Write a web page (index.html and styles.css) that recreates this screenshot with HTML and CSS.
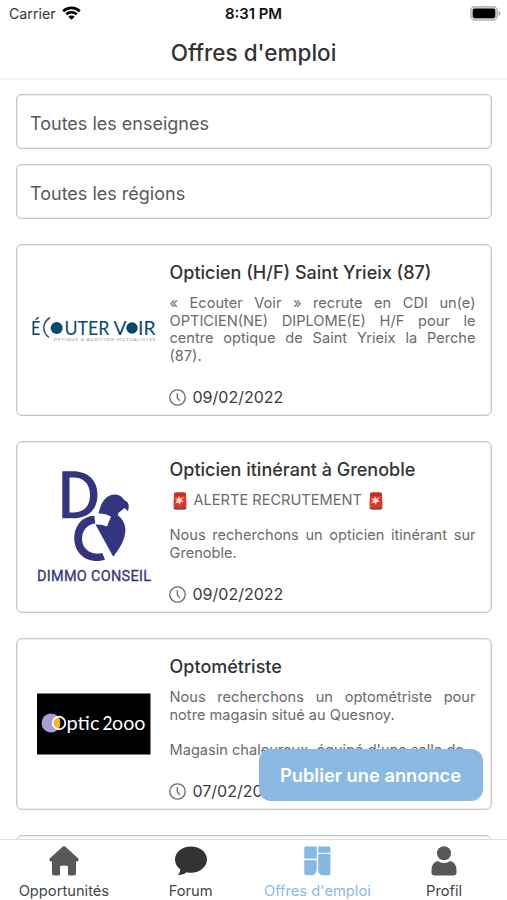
FILE: index.html
```html
<!DOCTYPE html>
<html lang="fr">
<head>
<meta charset="utf-8">
<title>Offres d'emploi</title>
<link rel="stylesheet" href="styles.css">
</head>
<body>
<div class="app">
  <header class="header">
    <div class="status">
      <div class="carrier"><span>Carrier</span>
        <svg class="wifi" width="19" height="14" viewBox="0 0 19 14"><path d="M1.200 5.200a12 12 0 0 1 16.600 0M4.200 8.300a7.700 7.700 0 0 1 10.600 0" fill="none" stroke="#000" stroke-width="2.600"/><path d="M9.500 13.800 6.300 10.700a4.600 4.600 0 0 1 6.400 0z"/></svg>
      </div>
      <time class="clock">8:31 PM</time>
      <svg class="battery" width="31" height="15" viewBox="0 0 31 15"><rect x=".8" y=".8" width="26.400" height="13.200" rx="3.800" fill="#ddd" stroke="#b5b5b5" stroke-width="1.400"/><rect x="2.700" y="2.600" width="22.600" height="9.600" rx="2"/><path d="M28.500 5v5q2-.8 2-2.500T28.500 5z" fill="#aaa"/></svg>
    </div>
    <h1 class="title">Offres d'emploi</h1>
  </header>

  <main class="content">
    <div class="filters">
      <div class="field">Toutes les enseignes</div>
      <div class="field">Toutes les régions</div>
    </div>

    <article class="card">
      <div class="logo">
        <svg width="126" height="30" viewBox="30 316 126 30">
          <g class="ecouter"><text x="31" y="335.500" textLength="9.500" lengthAdjust="spacingAndGlyphs">É</text><text x="64.500" y="335.500" textLength="45" lengthAdjust="spacingAndGlyphs">UTER</text><text x="113.500" y="335.500" textLength="13" lengthAdjust="spacingAndGlyphs">V</text><text x="138" y="335.500" textLength="17.500" lengthAdjust="spacingAndGlyphs">IR</text></g>
          <path d="M50 318.500c-8 5-8 15-1 20" fill="none" stroke="#31576d" stroke-width="1.500"/>
          <circle cx="56.700" cy="329" r="6" fill="#07496c"/><circle cx="132" cy="329" r="5.700" fill="#07496c"/>
          <text class="ecouter-sub" x="53.500" y="342.300" textLength="101.500">OPTIQUE &amp; AUDITION MUTUALISTES</text>
        </svg>
      </div>
      <div class="body">
        <h2 class="name">Opticien (H/F) Saint Yrieix (87)</h2>
        <p class="desc">« Ecouter Voir » recrute en CDI un(e) OPTICIEN(NE) DIPLOME(E) H/F pour le centre optique de Saint Yrieix la Perche (87).</p>
        <div class="date"><svg class="clock-icon" viewBox="0 0 17 17"><circle cx="8.500" cy="8.500" r="7.700"/><path d="M8.300 4.200v4.500l2.400 3.200"/></svg>09/02/2022</div>
      </div>
    </article>

    <article class="card">
      <div class="logo">
        <svg width="118" height="116" viewBox="34 470 118 116">
          <g fill="#34357f">
            <path fill-rule="evenodd" d="M62.300 472.300H73c15 0 24.500 9 24.500 23.700S88 519.300 73 519.300H62.300zM69.500 478.500v35H73c10.500 0 17-6 17-17.500s-6.500-17.500-17-17.500z"/>
            <path d="M98.500 514.500C100 508 102 502 106.500 498.500c5-4 13-4 16.500 1 1 1.500 2 2 3.500 3 2.500 1.500 2.800 5 1.300 10-1-2.500-2.500-3.500-4.300-3-1.500 3-6 3-5.500 7 5 3.500 8 10 7.300 16.500-1 10-7 18-12 24.700Q104 541 95.500 525.500q6-.5 11.500 2l4-10q-6-3.500-12.500-3z"/>
            <path d="M94.300 516.700C82 517 74.300 527 74.300 539.500 74.300 555 88 566 105 560.700l-2.700-6.700C91 557 82 549.500 82 540c0-8.500 5.500-15 13.300-15.500z"/>
          </g>
          <text class="dimmo" x="37" y="581.700" textLength="114" lengthAdjust="spacing">DIMMO CONSEIL</text>
        </svg>
      </div>
      <div class="body">
        <h2 class="name">Opticien itinérant à Grenoble</h2>
        <p class="desc"><span class="alert"><svg class="siren" viewBox="0 0 14 18"><path d="M.5 15h13v1.500l-2 1.300h-9L.5 16.500z" fill="#69565a"/><path d="M1 2.500Q1 .5 3 .5h8q2 0 2 2l.5 12Q7 17 .5 14.500z" fill="#e43424"/><path d="M1 2.500Q1 .5 3 .5h8q2 0 2 2V4H1z" fill="#c52b27"/><path d="m6 4 1.200 2.700L11 4.500 8.500 8l2.800 1.500-3.600.5L7 13l-1.500-2.600-3.200 1L4 8.500 2 6.500l3 .2z" fill="#ffd9d3"/></svg>ALERTE RECRUTEMENT<svg class="siren" viewBox="0 0 14 18"><path d="M.5 15h13v1.500l-2 1.300h-9L.5 16.500z" fill="#69565a"/><path d="M1 2.500Q1 .5 3 .5h8q2 0 2 2l.5 12Q7 17 .5 14.500z" fill="#e43424"/><path d="M1 2.500Q1 .5 3 .5h8q2 0 2 2V4H1z" fill="#c52b27"/><path d="m6 4 1.200 2.700L11 4.500 8.500 8l2.800 1.500-3.600.5L7 13l-1.500-2.600-3.200 1L4 8.500 2 6.500l3 .2z" fill="#ffd9d3"/></svg></span><br><br>Nous recherchons un opticien itinérant sur Grenoble.</p>
        <div class="date"><svg class="clock-icon" viewBox="0 0 17 17"><circle cx="8.500" cy="8.500" r="7.700"/><path d="M8.300 4.200v4.500l2.400 3.200"/></svg>09/02/2022</div>
      </div>
    </article>

    <article class="card">
      <div class="logo">
        <svg width="116" height="62" viewBox="35 693 116 62">
          <rect x="37" y="693.500" width="113.500" height="61" fill="#000"/>
          <circle cx="51" cy="723" r="9.500" fill="#a3a0d8"/>
          <circle cx="59" cy="723" r="6.300" fill="#000"/>
          <path d="M59 717a6 6 0 0 0 0 12q2.500-6 0-12z" fill="#f9b517"/>
          <circle cx="59" cy="723" r="6.300" fill="none" stroke="#fff" stroke-width="1.800"/>
          <text class="optic" x="66.500" y="729.500" textLength="33" lengthAdjust="spacingAndGlyphs">ptic</text>
          <text class="optic" x="102.500" y="729.500" textLength="10" lengthAdjust="spacingAndGlyphs">2</text>
          <text class="optic" x="112" y="729.500" textLength="33.500" lengthAdjust="spacingAndGlyphs">ooo</text>
        </svg>
      </div>
      <div class="body">
        <h2 class="name">Optométriste</h2>
        <p class="desc">Nous recherchons un optométriste pour notre magasin situé au Quesnoy.<br><br>Magasin chaleureux, équipé d'une salle de</p>
        <div class="date"><svg class="clock-icon" viewBox="0 0 17 17"><circle cx="8.500" cy="8.500" r="7.700"/><path d="M8.300 4.200v4.500l2.400 3.200"/></svg>07/02/2022</div>
      </div>
    </article>

    <article class="card"></article>
  </main>

  <button class="publish">Publier une annonce</button>

  <nav class="tabs">
    <a class="tab"><svg class="tab-icon" viewBox="0 0 30 30"><path fill="#58585a" d="M13.500.8q1.500-1.200 3 0L29.300 12.500q1.200 3-1.500 3H27V27q0 2.500-2.500 2.500h-4q-1.500 0-1.500-1.500v-7q0-1.200-1.200-1.200h-5.600Q11 19.800 11 21v7q0 1.500-1.500 1.500h-4Q3 29.500 3 27V15.500h-.8q-2.700 0-1.500-3z"/></svg><span>Opportunités</span></a>
    <a class="tab"><svg class="tab-icon forum" viewBox="0 0 32 30"><path fill="#333335" d="M16 .5c9 0 16 5.800 16 13s-7 13.200-16 13.200q-2.300 0-4.300-.5-3.200 3-7.700 2.800-1.200-.2-.5-1 2-2 1.800-4.500Q0 19.500 0 13.500C0 6.300 7 .5 16 .5z"/></svg><span>Forum</span></a>
    <a class="tab active"><svg class="tab-icon" viewBox="0 0 30 30"><g fill="#85b8e3"><path d="M4 .5h10.800v12H2.300V2.200Q2.300.5 4 .5zM16.200.5h10.300q2 0 2 2v4.300H16.200zM2.300 14.200h12.500v9q-.5 6-6 6H4q-1.700 0-1.700-1.700zM16.200 8h12.300v19.500q0 1.700-1.700 1.700H20q-4-1-3.800-5z"/></g></svg><span>Offres d'emploi</span></a>
    <a class="tab"><svg class="tab-icon" viewBox="0 0 30 30"><circle cx="15" cy="7.300" r="7" fill="#58585a"/><path fill="#58585a" d="M8.500 15q6.500 4 13 0 6 2 6 9v2.500q0 3-3 3h-19q-3 0-3-3V24q0-7 6-9z"/></svg><span>Profil</span></a>
  </nav>
</div>
</body>
</html>
```

FILE: styles.css
```css
* { box-sizing: border-box; }
body { margin: 0; background: #fff; color: #333335; font-family: Inter, "Liberation Sans", sans-serif; }
h1, h2, p { margin: 0; }
svg { display: block; flex: none; }
.app { position: relative; display: flex; flex-direction: column; width: 507px; height: 900px; overflow: hidden; }
.header { flex: none; height: 80px; border-bottom: 2px solid #f6f6f6; }
.status { display: grid; grid-template-columns: 1fr auto 1fr; align-items: center; height: 27px; padding: 0 6px 0 9px; }
.carrier { display: flex; align-items: center; gap: 6px; font-size: 14.200px; color: #333; }
.wifi { margin-top: -2px; }
.clock { margin-left: -3px; font-size: 14.900px; font-weight: 600; color: #111; }
.battery { justify-self: end; }
.title { margin-top: 10.500px; text-align: center; font-size: 22.500px; line-height: 30px; font-weight: 500; }
.content { flex: 1; min-height: 0; overflow: hidden; display: flex; flex-direction: column; gap: 25px; padding: 14px 15px 0 16px; }
.filters { display: flex; flex-direction: column; gap: 15px; }
.field { height: 55px; padding: 3px 13px 0; display: flex; align-items: center; border: 1px solid #c6c6c8; box-shadow: inset 0 0 0 1px #ebebec; border-radius: 5px; font-size: 18px; color: #58585a; }
.card { flex: none; display: flex; height: 172px; border: 1px solid #c6c6c8; box-shadow: inset 0 0 0 1px #ebebec; border-radius: 6px; }
.logo { width: 152.500px; display: flex; align-items: center; justify-content: center; }
.body { flex: 1; padding: 17px 15.500px 0 0; }
.name { font-size: 18px; line-height: 22px; font-weight: 500; white-space: nowrap; }
.desc { margin-top: 11px; height: 70px; font-size: 14.600px; line-height: 17.500px; color: #6a6a6c; text-align: justify; }
.alert { display: inline-flex; align-items: center; height: 17px; gap: 7px; padding-left: 3px; vertical-align: top; }
.siren { width: 14px; height: 18px; }
.date { display: flex; align-items: center; gap: 7px; margin-top: 22px; line-height: 20px; font-size: 16px; color: #3c3c3e; }
.clock-icon { width: 17px; height: 17px; margin-left: -1px; fill: none; stroke: #6a6a6c; stroke-width: 1.300; }
.publish { position: absolute; left: 259px; top: 749px; width: 224px; height: 52px; border: 0; border-radius: 12px; background: #8ab9e3; color: #fff; font: 600 18.300px Inter, sans-serif; padding: 0 1px 1px 0; white-space: nowrap; }
.tabs { flex: none; display: grid; grid-template-columns: repeat(4, 1fr); height: 61px; border-top: 1px solid #dedee0; background: #fff; }
.tab { display: flex; flex-direction: column; align-items: center; padding: 6px 0 0 1px; gap: 6px; font-size: 14.700px; line-height: 18px; color: #444446; white-space: nowrap; }
.tab-icon { width: 30px; height: 30px; }
.forum { width: 32px; }
.active { color: #8abbe4; }
.ecouter { font: 19px/1 Lato, sans-serif; fill: #07496c; }
.ecouter-sub { font: 4.500px/1 Lato, sans-serif; fill: #8b969e; }
.dimmo { font: 14.500px Roboto, sans-serif; fill: #34357f; stroke: #34357f; stroke-width: .3px; }
.optic { font: 19px Lato, sans-serif; fill: #fff; }
```
